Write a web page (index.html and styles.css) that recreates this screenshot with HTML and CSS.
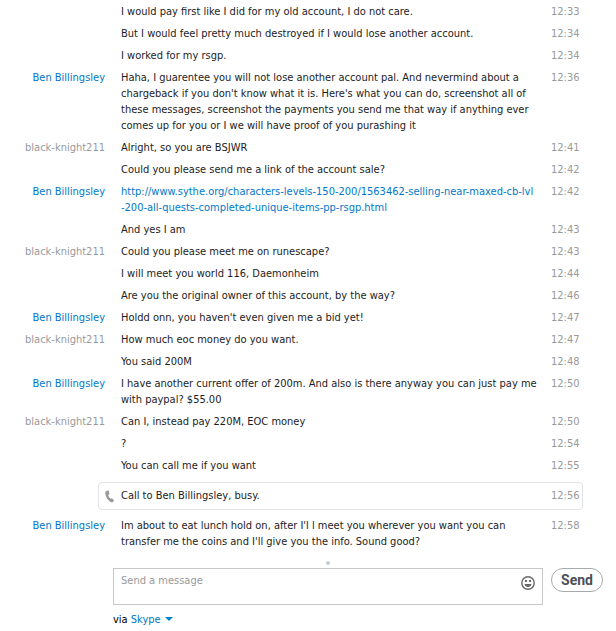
FILE: index.html
```html
<!DOCTYPE html>
<html lang="en">
<head>
<meta charset="utf-8">
<title>Conversation</title>
<link rel="stylesheet" href="styles.css">
</head>
<body>
<main class="chat">
  <div class="row"><p class="text">I would pay first like I did for my old account, I do not care.</p><time class="time">12:33</time></div>
  <div class="row"><p class="text">But I would feel pretty much destroyed if I would lose another account.</p><time class="time">12:34</time></div>
  <div class="row"><p class="text">I worked for my rsgp.</p><time class="time">12:34</time></div>
  <div class="row"><span class="name peer">Ben Billingsley</span><p class="text">Haha, I guarentee you will not lose another account pal. And nevermind about a<br>chargeback if you don't know what it is. Here's what you can do, screenshot all of<br>these messages, screenshot the payments you send me that way if anything ever<br>comes up for you or I we will have proof of you purashing it</p><time class="time">12:36</time></div>
  <div class="row"><span class="name">black-knight211</span><p class="text">Alright, so you are BSJWR</p><time class="time">12:41</time></div>
  <div class="row"><p class="text">Could you please send me a link of the account sale?</p><time class="time">12:42</time></div>
  <div class="row"><span class="name peer">Ben Billingsley</span><p class="text"><a class="link" href="#">http://www.sythe.org/characters-levels-150-200/1563462-selling-near-maxed-cb-lvl<br>-200-all-quests-completed-unique-items-pp-rsgp.html</a></p><time class="time">12:42</time></div>
  <div class="row"><p class="text">And yes I am</p><time class="time">12:43</time></div>
  <div class="row"><span class="name">black-knight211</span><p class="text">Could you please meet me on runescape?</p><time class="time">12:43</time></div>
  <div class="row"><p class="text">I will meet you world 116, Daemonheim</p><time class="time">12:44</time></div>
  <div class="row"><p class="text">Are you the original owner of this account, by the way?</p><time class="time">12:46</time></div>
  <div class="row"><span class="name peer">Ben Billingsley</span><p class="text">Holdd onn, you haven't even given me a bid yet!</p><time class="time">12:47</time></div>
  <div class="row"><span class="name">black-knight211</span><p class="text">How much eoc money do you want.</p><time class="time">12:47</time></div>
  <div class="row"><p class="text">You said 200M</p><time class="time">12:48</time></div>
  <div class="row"><span class="name peer">Ben Billingsley</span><p class="text">I have another current offer of 200m. And also is there anyway you can just pay me<br>with paypal? $55.00</p><time class="time">12:50</time></div>
  <div class="row"><span class="name">black-knight211</span><p class="text">Can I, instead pay 220M, EOC money</p><time class="time">12:50</time></div>
  <div class="row"><p class="text">?</p><time class="time">12:54</time></div>
  <div class="row"><p class="text">You can call me if you want</p><time class="time">12:55</time></div>
  <div class="call">
    <svg class="phone" viewBox="0 0 10 13" aria-hidden="true"><path d="M1 1.2 3 .5Q3.6.4 3.8 1L4.4 3.4Q4.5 4 4 4.3L3.2 4.9Q3.7 7 5.4 8.8L6.4 8.4Q6.9 8.2 7.3 8.6L8.8 10.2Q9.2 10.7 8.8 11.1L7.6 12.2Q6.8 12.8 5.6 12Q.9 9 .3 3.2Q.2 1.7 1 1.2Z"/></svg>
    <p class="text">Call to Ben Billingsley, busy.</p><time class="time">12:56</time>
  </div>
  <div class="row"><span class="name peer">Ben Billingsley</span><p class="text">Im about to eat lunch hold on, after I'l l meet you wherever you want you can<br>transfer me the coins and I'll give you the info. Sound good?</p><time class="time">12:58</time></div>
</main>
<form class="composer">
  <div class="resize"><div class="grip"></div></div>
  <div class="entry">
    <div class="field">
      <textarea class="input" aria-label="Message" placeholder="Send a message"></textarea>
      <button class="smile" type="button" aria-label="Emoticons">
        <svg viewBox="0 0 14 14" width="14" height="14"><circle cx="7" cy="7" r="6.2" fill="none" stroke="#66686b" stroke-width="1.4"/><path d="M4 4h2v2H4zM8 4h2v2H8zM3.5 8h7Q10 11 7 11T3.5 8Z" fill="#66686b"/></svg>
      </button>
    </div>
    <button class="send" type="button">Send</button>
  </div>
  <div class="via">via <a class="link" href="#">Skype<svg class="caret" viewBox="0 0 8 4" width="8" height="4" aria-hidden="true"><path d="M0 0h8L4 4Z" fill="#0082d1"/></svg></a></div>
</form>
</body>
</html>
```
FILE: styles.css
```css
body {
  margin: 0;
  background: #fff;
  color: #1c1c24;
  font: 11px/16px "DejaVu Sans Condensed", "DejaVu Sans", sans-serif;
}

.row {
  display: grid;
  grid-template-columns: 105px minmax(0, 1fr) 30px;
  column-gap: 16px;
  padding: 4px 35px 2px 0;
}

.name {
  grid-column: 1;
  color: #999;
  text-align: right;
  white-space: nowrap;
}

.peer,
.link {
  color: #0078ca;
  text-decoration: none;
}

.text {
  grid-column: 2;
  margin: 0;
  white-space: nowrap;
}

.time {
  grid-column: 3;
  color: #999;
}

.call {
  display: grid;
  grid-template-columns: 10px minmax(0, 1fr) 30px;
  column-gap: 6px;
  align-items: center;
  box-sizing: border-box;
  height: 28px;
  margin: 6px 33px 4px 98px;
  padding: 0 1px 0 6px;
  border: 1px solid #e2e3e9;
  border-radius: 4px;
}

.phone {
  width: 10px;
  height: 13px;
  fill: #999;
}

.composer {
  padding: 0 13px 0 113px;
}

.resize {
  display: flex;
  justify-content: center;
  margin-right: 60px;
  padding: 9px 0 3px;
}

.grip {
  width: 4px;
  height: 4px;
  border-radius: 50%;
  background: #c3ccd6;
}

.entry {
  display: flex;
  align-items: flex-start;
  gap: 8px;
}

.field {
  display: flex;
  flex: 1;
  box-sizing: border-box;
  height: 37px;
  border: 1px solid #c8c8c8;
}

.input {
  flex: 1;
  min-width: 0;
  padding: 4px 7px 2px;
  border: 0;
  outline: 0;
  background: none;
  color: inherit;
  font: inherit;
  resize: none;
}

.input::placeholder {
  color: #999;
}

.smile {
  display: flex;
  align-items: flex-start;
  padding: 7px 7px 0 0;
  border: 0;
  background: none;
}

.send {
  width: 52px;
  height: 24px;
  padding: 0;
  border: 1px solid #a5abab;
  border-radius: 12px;
  background: #fff;
  color: #4c5057;
  font: bold 14px/20px Roboto, "Noto Sans", sans-serif;
}

.via {
  padding: 7px 0 3px;
  color: #000;
}

.caret {
  margin-left: 4px;
  vertical-align: 2px;
}
```
